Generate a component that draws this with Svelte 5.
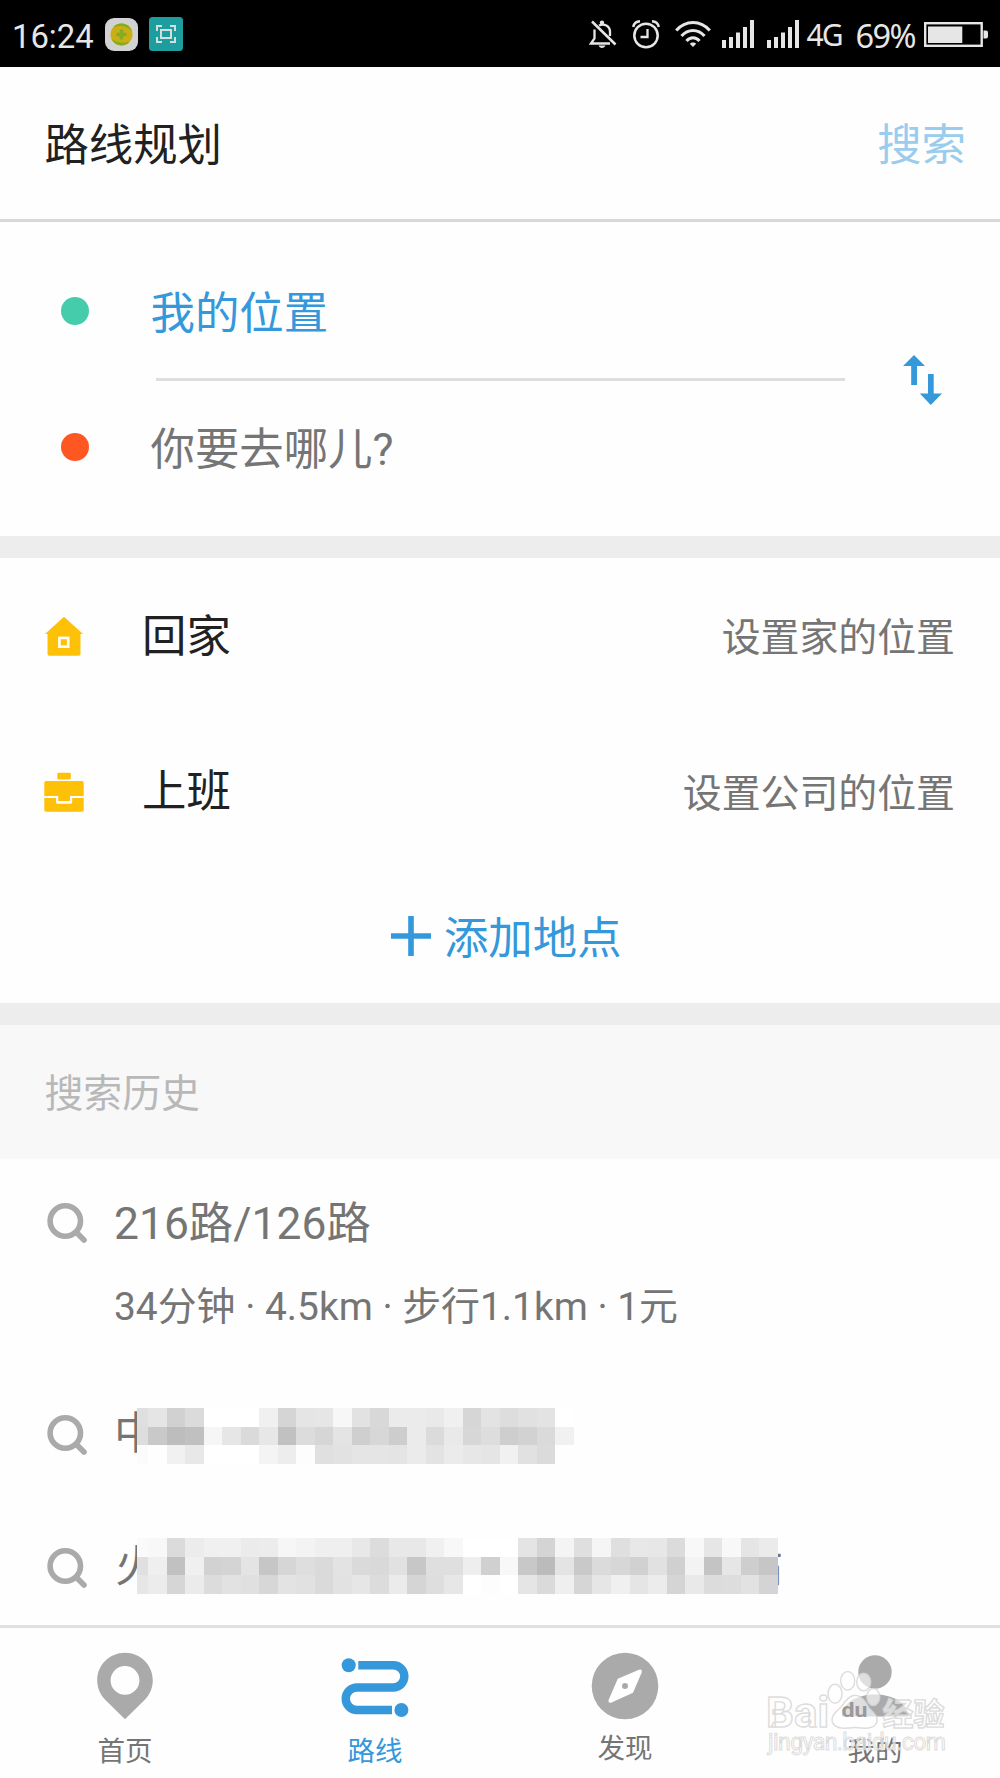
<script lang="ts">
  const places = [
    { icon: 'home', label: '回家', hint: '设置家的位置' },
    { icon: 'work', label: '上班', hint: '设置公司的位置' },
  ];

  const tabs = [
    { id: 'home', label: '首页' },
    { id: 'route', label: '路线' },
    { id: 'find', label: '发现' },
    { id: 'me', label: '我的' },
  ];

  // Privacy mosaic: one grey level (hex byte) for each block, row by row.
  const masked = [
    {
      id: 'upper',
      first: '中',
      last: '',
      rows: [
        'df e5 d1 db ff ff ff f0 d5 e5 e6 f7 e2 d8 eb eb e9 f0 d6 e3 dd e1 e3 ff',
        'dd c9 bd c0 f6 e6 da e7 c1 dc d6 e4 cf d7 cd eb db e9 d7 dd ce d2 da f1',
        'fb fe f1 e8 ff ff ff f4 ed fd e0 e2 e5 e5 e4 eb e3 eb e7 e5 f1 e1 db fe',
      ],
    },
    {
      id: 'lower',
      first: '火',
      last: '站',
      rows: [
        'fa f8 db ec f0 f0 eb ec f6 f3 ef ef e8 dc e8 e8 f0 f8 ff ff ff e4 d4 f4 df f5 df e8 e7 db f8 e6 f8 e5 eb',
        'e0 ef c1 f0 d2 d4 e4 c6 d6 de da e3 da d9 e1 c7 df df ee d0 f8 c8 bb e4 c9 db d7 d1 e1 d0 f3 c4 e6 ce c6',
        'e6 ec d6 eb dc e2 e0 d7 e3 e1 da e2 e6 dc eb d5 de e7 ff fd ff e5 da ef d6 e6 f0 e5 ec d5 e9 dc dd e2 d4',
      ],
    },
  ].map((m) => ({ ...m, rows: m.rows.map((r) => r.split(' ')) }));

  const cell = 18.52;
  const lead = 11;
</script>

{#snippet magnifier()}
  <svg class="magnifier" width="40" height="40" viewBox="0 0 40 40">
    <circle cx="18.3" cy="18" r="15.2" fill="none" stroke="#aaa" stroke-width="5.6" />
    <path d="M29.5 29.5 37 37" stroke="#aaa" stroke-width="5.6" stroke-linecap="round" />
  </svg>
{/snippet}

{#snippet signal()}
  <svg width="32" height="28" viewBox="0 0 32 28" fill="#e6e6e6">
    <path d="M0 20h4v8H0zM7 17h4v11H7zM14 12.500h4V28h-4zM21 7h4v21h-4zM28 0h4v28h-4z" />
  </svg>
{/snippet}

<div class="screen">
  <header class="status">
    <span class="clock">16:24</span>
    <svg class="app-a" width="33" height="33" viewBox="0 0 33 33">
      <rect width="33" height="33" rx="9" fill="#d2d2d2" />
      <circle cx="16.500" cy="16.500" r="11" fill="#c9ae16" />
      <path d="M8 9.500a11 11 0 0 1 19 4C23 8 15 6.500 8 9.500zM6.500 21a11 11 0 0 0 18 3C18 25.500 11 24.500 6.500 21z" fill="#82ad20" />
      <path d="M16.500 11.500v10M11.500 16.500h10" stroke="#82ad20" stroke-width="3.4" />
    </svg>
    <svg class="app-b" width="34" height="34" viewBox="0 0 34 34">
      <rect width="34" height="34" rx="3.500" fill="#1d9d9d" />
      <g fill="none" stroke="#d3dede" stroke-width="2">
        <path d="M8 14V9h5M21 9h5v5M26 20v5h-5M13 25H8v-5" />
        <rect x="12" y="13" width="10" height="8" />
      </g>
    </svg>

    <div class="indicators">
      <svg class="bell" width="28" height="29" viewBox="0 0 28 29" fill="none" stroke="#e6e6e6" stroke-width="2.300">
        <path d="M5.500 9.500v9L2 23.500h19M10 5.500c5-2.500 11 .5 11 6.500v4" />
        <path d="M3 1.500 26.500 24.500" stroke-width="2.500" />
        <circle cx="13" cy="2.800" r="2.200" fill="#e6e6e6" stroke="none" />
        <path d="M9.500 25.500h7c-1 3.300-6 3.300-7 0z" fill="#e6e6e6" stroke="none" />
      </svg>
      <svg class="alarm" width="28" height="29" viewBox="0 0 28 29" fill="none" stroke="#e6e6e6" stroke-width="2.500">
        <circle cx="14" cy="15.500" r="11.700" />
        <path d="M15.500 9v8H8.500" stroke-width="2.300" />
        <path d="M1.200 7C1.800 4 4.500 1.500 8 1.300M26.800 7C26.200 4 23.500 1.500 20 1.300" />
      </svg>
      <svg class="wifi" width="36" height="28" viewBox="0 0 36 28" fill="none" stroke="#e6e6e6" stroke-width="3">
        <path d="M1.200 10.500C10.500-.2 25.500-.2 34.800 10.500M6.500 16C13 8.500 23 8.500 29.500 16M11.500 21c3.700-4.300 9.300-4.300 13 0" />
        <path d="M18 27l-3.200-3.300c1.700-1.700 4.700-1.700 6.400 0z" fill="#e6e6e6" stroke="none" />
      </svg>
      <span class="bars">{@render signal()}</span>
      {@render signal()}
      <span class="network">4G</span>
      <span class="percent">69%</span>
      <svg class="battery" width="65" height="25" viewBox="0 0 65 25">
        <rect x="1.200" y="1.200" width="56.500" height="22.600" fill="none" stroke="#e6e6e6" stroke-width="2.400" />
        <path d="M4 4.500h34.300v16.500H4zM59.500 8.500H62q2 0 2 2v4q0 2-2 2h-2.500z" fill="#e6e6e6" />
      </svg>
    </div>
  </header>

  <div class="titlebar">
    <h1>路线规划</h1>
    <span class="search">搜索</span>
  </div>

  <section class="endpoints">
    <div class="fields">
      <div class="field from"><i class="dot"></i><span>我的位置</span></div>
      <hr />
      <div class="field to"><i class="dot"></i><span>你要去哪儿?</span></div>
    </div>
    <svg class="swap" width="40" height="50" viewBox="0 0 40 50" fill="#3498db">
      <path d="M11 0 22 11H14V30H8.200V11H0zM25 19h5.700v19.500H39L27.800 50 16.800 38.500H25z" />
    </svg>
  </section>

  <section class="places">
    {#each places as place}
      <div class="place">
        {#if place.icon === 'home'}
          <svg class="place-icon" width="40" height="40" viewBox="0 0 40 40">
            <path d="M20 .8 39 18H36.500V38q0 1.700-1.700 1.700H5.200Q3.500 39.700 3.500 38V18H1z" fill="#ffc107" />
            <rect x="15.400" y="21.900" width="8.800" height="8.800" fill="#ffc107" stroke="#fff" stroke-width="2.600" />
          </svg>
        {:else}
          <svg class="place-icon" width="40" height="40" viewBox="0 0 40 40" fill="#ffc107">
            <rect x="13.300" y=".8" width="13.500" height="6.600" rx="1.300" />
            <path d="M2 9h36q1.700 0 1.700 1.700V24H26v5H14.200v-5H.3V10.700Q.3 9 2 9zM.3 26H12v4q0 1.700 1.700 1.700h12.800q1.700 0 1.700-1.700v-4h11.500v12q0 1.700-1.700 1.700H2Q.3 39.700.3 38z" />
          </svg>
        {/if}
        <span class="place-label">{place.label}</span>
        <span class="place-hint">{place.hint}</span>
      </div>
    {/each}
    <div class="add">
      <svg width="40" height="40" viewBox="0 0 40 40"><path d="M20 0V40M0 20H40" stroke="#3498db" stroke-width="5.600" /></svg>
      <span>添加地点</span>
    </div>
  </section>

  <h2>搜索历史</h2>

  <section class="history">
    <div class="entry trip">
      {@render magnifier()}
      <div class="trip-text">
        <span class="trip-name">216路/126路</span>
        <span class="trip-info">34分钟 · 4.5km · 步行1.1km · 1元</span>
      </div>
    </div>
    {#each masked as m}
      <div class="entry hidden-entry {m.id}">
        {@render magnifier()}
        <div class="hidden-text">
          <span>{m.first}</span><span>{m.last}</span>
          <svg class="mosaic" width="660" height="56" viewBox="0 0 660 56" shape-rendering="crispEdges">
            {#each m.rows as row, r}
              {#each row as tone, c}
                <rect
                  x={c === 0 ? 0 : lead + (c - 1) * cell}
                  y={r * cell}
                  width={c === 0 ? lead : cell}
                  height={cell}
                  fill={`#${tone}${tone}${tone}`}
                />
              {/each}
            {/each}
          </svg>
        </div>
      </div>
    {/each}
  </section>

  <nav>
    {#each tabs as tab}
      <div class="tab {tab.id}">
        <svg width="70" height="70" viewBox="0 0 70 70">
          {#if tab.id === 'home'}
            <path fill="#aaa" fill-rule="evenodd" d="M35 1.700C19.500 1.700 7.200 14 7.200 29.200c0 7.500 3 14.500 8 19.500L35 68.300l19.800-19.600c5-5 8-12 8-19.500C62.800 14 50.500 1.700 35 1.700zM35 15a14.400 14.400 0 1 1 0 28.800A14.400 14.400 0 1 1 35 15z" />
          {:else if tab.id === 'route'}
            <g fill="#3498db">
              <circle cx="8.700" cy="14.200" r="7" />
              <circle cx="61.400" cy="59" r="7" />
              <path d="M18.300 14.200H53.200A11.150 11.150 0 0 1 53.200 36.500H17A11.150 11.150 0 0 0 17 59H52" fill="none" stroke="#3498db" stroke-width="8.400" />
            </g>
          {:else if tab.id === 'find'}
            <circle cx="35" cy="35" r="33.300" fill="#aaa" />
            <path d="M27.800 27.800 49 18.700q3.500-.8 2.700 2.800L43 41.800 21.500 51.500q-3.800 1-2.800-2.800z" fill="#fff" />
            <circle cx="35" cy="35" r="3" fill="#aaa" />
          {:else}
            <circle cx="35" cy="21" r="16.700" fill="#aaa" />
            <path d="M1.700 65.500C2.500 51 18 43.500 35 43.500S67.500 51 68.300 65.500z" fill="#aaa" />
          {/if}
        </svg>
        <span>{tab.label}</span>
      </div>
    {/each}
  </nav>

  <svg class="watermark" width="190" height="96" viewBox="0 0 190 96">
    <g fill="#fff" fill-opacity=".62" stroke="#d6d6d6" stroke-opacity=".85" stroke-width="1.400">
      <text class="wm-latin" x="3" y="55.500" textLength="63" lengthAdjust="spacingAndGlyphs">Bai</text>
      <text class="wm-han" x="119.500" y="54" textLength="62">经验</text>
      <ellipse cx="72" cy="22.700" rx="7" ry="9.500" />
      <ellipse cx="84.700" cy="9.800" rx="7" ry="9.200" />
      <ellipse cx="100.700" cy="11" rx="7" ry="8.800" />
      <ellipse cx="110.300" cy="26" rx="6.500" ry="8.500" />
      <path d="M90.500 24.500c8-1 12 6 16 13 5 5 9.500 9 7 14.500-3 6.500-12 5.500-21.500 4.500-9 1-18 2-22-4-3.500-7 3-11.500 8-16.500 3.500-5 7-10.500 12.500-11.500z" />
      <text class="wm-url" x="5" y="79" textLength="178">jingyan.baidu.com</text>
    </g>
    <text class="wm-du" x="78.500" y="46" textLength="26" lengthAdjust="spacingAndGlyphs">du</text>
  </svg>
</div>

<style>
  :global(body) {
    margin: 0;
    background: #fefefe;
  }

  .screen {
    position: relative;
    width: 1000px;
    height: 1778px;
    overflow: hidden;
    background: #fefefe;
    color: #757575;
    font-family: Roboto, 'Noto Sans CJK SC', sans-serif;
    font-size: 44.4px;
    line-height: 52px;
    white-space: nowrap;
  }

  svg {
    display: block;
    flex: none;
  }

  .status {
    display: flex;
    align-items: center;
    height: 66.500px;
    padding: 2px 11px 0 12px;
    box-sizing: border-box;
    background: #000;
    color: #e6e6e6;
  }

  .clock {
    width: 93px;
    padding-top: 5px;
    font-size: 32.800px;
  }

  .app-b { margin-left: 11px; }

  .indicators {
    display: flex;
    align-items: center;
    margin-left: auto;
  }

  .alarm { margin-left: 15.500px; }
  .wifi { margin-left: 15px; }
  .bars { margin: 0 12.500px 0 11px; }

  .network {
    width: 48px;
    padding: 1px 0 0 8px;
    font-family: 'Noto Sans', sans-serif;
    font-size: 30px;
    letter-spacing: -2px;
    box-sizing: border-box;
  }

  .percent {
    width: 77.500px;
    padding: 4px 0 0 9px;
    font-family: 'Noto Sans', sans-serif;
    font-size: 32.500px;
    letter-spacing: -1.600px;
    box-sizing: border-box;
  }

  .titlebar {
    display: flex;
    align-items: center;
    justify-content: space-between;
    height: 153px;
    padding: 6px 34px 0 44.400px;
    box-sizing: border-box;
    box-shadow: none;
    border-bottom: 0;
  }

  .titlebar {
    height: 155.500px;
    border-bottom: 3px solid #d8d8d8;
  }

  h1 {
    margin: 0;
    font-size: 44.400px;
    font-weight: 400;
    color: #212121;
  }

  .search { color: #9accee; }

  .endpoints {
    display: flex;
    align-items: center;
    height: 314px;
    padding: 0 57px 0 61px;
    border-bottom: 22px solid #ededed;
  }

  .fields { width: 784px; }

  .field {
    display: flex;
    align-items: center;
    height: 133.500px;
  }

  .field span { padding: 6px 0 0 61.500px; }

  .dot {
    width: 28px;
    height: 28px;
    border-radius: 50%;
  }

  .from { color: #3498db; }
  .from .dot { background: #45ccaa; }
  .to .dot { background: #ff5722; }

  hr {
    height: 3px;
    margin: 0 0 0 94.500px;
    border: 0;
    background: #dedede;
  }

  .swap { margin: 1px 0 0 58px; }

  .places { border-bottom: 22px solid #ededed; }

  .place {
    display: flex;
    align-items: center;
    height: 155.500px;
    padding: 0 45px 0 44px;
  }

  .place-icon { margin-top: 1px; }

  .place-label {
    margin-left: 58px;
    padding-top: 2px;
    color: #212121;
  }

  .place-hint {
    margin: 5px 0 0 auto;
    font-size: 38.900px;
  }

  .add {
    display: flex;
    align-items: center;
    justify-content: center;
    gap: 12.500px;
    height: 134px;
    padding-left: 13px;
    color: #3498db;
  }

  .add span { padding-top: 6px; }

  h2 {
    margin: 0;
    height: 133.500px;
    padding: 4px 0 0 44.400px;
    box-sizing: border-box;
    background: #f8f8f8;
    color: #b8b8b8;
    font-size: 38.900px;
    font-weight: 400;
    line-height: 130px;
  }

  .history {
    height: 466px;
    padding-left: 47px;
  }

  .entry { display: flex; }
  .magnifier { margin-top: 7px; }

  .trip {
    height: 174px;
    padding-top: 37px;
  }

  .trip-text {
    display: flex;
    flex-direction: column;
    gap: 31px;
    padding: 2px 0 0 27px;
  }

  .trip-info { font-size: 38.900px; }

  .hidden-entry {
    height: 95px;
    padding-top: 38px;
  }

  .hidden-text {
    position: relative;
    display: flex;
    justify-content: space-between;
    width: 667.500px;
    height: 52px;
    margin-left: 28px;
  }

  .upper .hidden-text { margin-left: 27px; }

  .mosaic {
    position: absolute;
    left: 22px;
    top: 0;
  }

  .upper .mosaic { left: 23px; }
  .lower .mosaic { top: -3px; }

  nav {
    display: flex;
    height: 150px;
    border-top: 3px solid #e0e0e0;
  }

  .tab {
    display: flex;
    flex-direction: column;
    align-items: center;
    width: 250px;
    padding-top: 23px;
    font-size: 27.500px;
    line-height: 34px;
  }

  .tab span { padding-top: 14px; }
  .find span { padding-top: 11px; }
  .route { color: #3498db; }

  .watermark {
    position: absolute;
    left: 763px;
    top: 1671px;
  }

  .wm-latin {
    font: 700 42px Roboto, sans-serif;
  }

  .wm-han {
    font: 700 31px 'Noto Sans CJK SC', sans-serif;
  }

  .wm-url {
    font: 400 23px Roboto, sans-serif;
    stroke-width: 1px;
  }

  .wm-du {
    font: 700 20px Roboto, sans-serif;
    fill: #999;
  }
</style>
